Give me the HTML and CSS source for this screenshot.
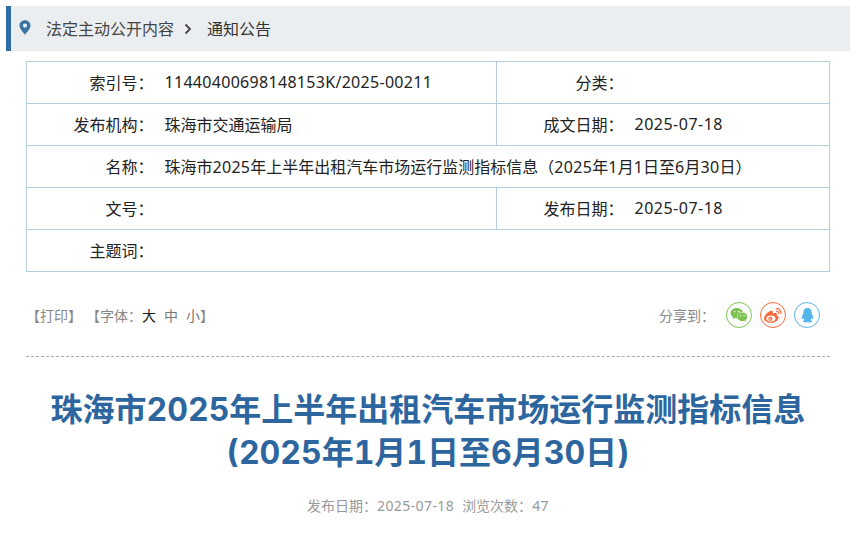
FILE: index.html
```html
<!DOCTYPE html>
<html lang="zh-CN">
<head>
<meta charset="utf-8">
<title>通知公告</title>
<link rel="stylesheet" href="styles.css">
</head>
<body>
<div class="crumb">
  <svg class="pin" width="12" height="15" viewBox="0 0 12 15"><path fill-rule="evenodd" fill="#3a72a3" d="M6 .3C2.800.3.5 2.700.5 5.600c0 3.400 3.800 6.900 5.500 9.200 1.700-2.300 5.500-5.800 5.500-9.200C11.500 2.700 9.200.3 6 .3zM6 3.500a2.100 2.100 0 1 1 0 4.200 2.100 2.100 0 0 1 0-4.200z"/></svg>
  <span class="crumb-link">法定主动公开内容</span>
  <svg class="chev" width="8" height="12" viewBox="0 0 8 12"><path d="M1.500 1.500 6 6l-4.500 4.500" fill="none" stroke="#444" stroke-width="1.800"/></svg>
  <span class="crumb-cur">通知公告</span>
</div>
<div class="wrap">
  <table class="meta">
    <tr><th>索引号：</th><td class="val"><span class="num">11440400698148153K/2025-00211</span></td><th class="th2">分类：</th><td class="val2"></td></tr>
    <tr><th>发布机构：</th><td class="val">珠海市交通运输局</td><th class="th2">成文日期：</th><td class="val2"><span class="date">2025-07-18</span></td></tr>
    <tr><th>名称：</th><td class="val" colspan="3">珠海市<span class="num">2025</span>年上半年出租汽车市场运行监测指标信息（<span class="num">2025</span>年<span class="num">1</span>月<span class="num">1</span>日至<span class="num">6</span>月<span class="num">30</span>日）</td></tr>
    <tr><th>文号：</th><td class="val"></td><th class="th2">发布日期：</th><td class="val2"><span class="date">2025-07-18</span></td></tr>
    <tr><th>主题词：</th><td class="val" colspan="3"></td></tr>
  </table>
  <div class="tools">
    <div class="tools-left">
      <span>【打印】</span>
      <span class="font-opt">【字体：<b class="active">大</b><b>中</b><b>小</b>】</span>
    </div>
    <div class="share">
      <span class="share-label">分享到：</span>
      <span class="ico ico-wx">
        <svg width="18" height="16" viewBox="0 0 20 18"><path fill="#7cc34f" d="M7.500 1C3.600 1 .6 3.500.6 6.800c0 1.900 1 3.400 2.700 4.600l-.7 2.100 2.400-1.200c.8.200 1.600.3 2.500.3h.6c-.2-.5-.3-1.100-.3-1.600 0-3 2.600-5.400 6-5.400h.6C13.700 2.900 10.900 1 7.500 1z"/><path fill="#7cc34f" d="M19.400 11c0-2.700-2.600-4.800-5.600-4.800-3.200 0-5.700 2.100-5.700 4.800s2.500 4.800 5.700 4.800c.7 0 1.300-.1 2-.3l1.900 1-.5-1.700c1.300-.9 2.200-2.300 2.200-3.800z"/><circle cx="5.200" cy="5" r=".9" fill="#fff"/><circle cx="9.800" cy="5" r=".9" fill="#fff"/><circle cx="11.800" cy="9.800" r=".7" fill="#fff"/><circle cx="15.800" cy="9.800" r=".7" fill="#fff"/></svg>
      </span>
      <span class="ico ico-wb">
        <svg width="20" height="17" viewBox="0 0 20 18"><path fill="#f8693d" d="M8.300 16.800c-4 0-7.800-1.900-7.800-4.900 0-1.600 1-3.400 2.700-5.100C5.600 4.400 8.400 3.400 9.500 4.500c.5.500.5 1.300.2 2.300 1.500-.6 3.400-.9 4.200.1.400.6.400 1.300 0 2.200 1.200.4 2.100 1.100 2.100 2.400 0 2.400-3.400 5.300-7.700 5.300z"/><ellipse cx="7.800" cy="12.300" rx="4.800" ry="3.200" fill="#fff"/><circle cx="7.200" cy="12.500" r="2.200" fill="#f8693d"/><circle cx="6.800" cy="12.800" r=".8" fill="#fff"/><path d="M13.500 1.800c2.900-.5 5.400 2 4.800 5M13.800 4.500c1.300-.2 2.300.9 2.100 2.200" fill="none" stroke="#f8693d" stroke-width="1.300" stroke-linecap="round"/></svg>
      </span>
      <span class="ico ico-qq">
        <svg width="15" height="17" viewBox="0 0 18 20"><path fill="#55b5ea" d="M9 1C5.800 1 4 3.400 4 6.300v1.500C2.900 9.500 2 11.300 2 13c0 1.200.4 1.600.9 1.300.4-.2.800-.7 1.100-1.300.2 1 .7 1.900 1.400 2.500-1 .4-1.800.9-1.800 1.500C3.600 18 5.400 18.500 7 18.300c.8-.1 1.500-.3 2-.5.500.2 1.200.4 2 .5 1.600.2 3.400-.3 3.400-1.300 0-.6-.8-1.100-1.800-1.500.7-.6 1.200-1.500 1.400-2.500.3.600.7 1.100 1.100 1.300.5.300.9-.1.900-1.300 0-1.700-.9-3.500-2-5.200V6.300C14 3.400 12.200 1 9 1z"/></svg>
      </span>
    </div>
  </div>
  <h1 class="title">珠海市2025年上半年出租汽车市场运行监测指标信息<br>(2025年1月1日至6月30日)</h1>
  <p class="info">发布日期：<span class="num">2025-07-18</span><span class="views">浏览次数：<span class="num">47</span></span></p>
</div>
</body>
</html>
```
FILE: styles.css
```css
* { box-sizing: border-box; }
html, body { margin: 0; padding: 0; background: #fff; }
body {
  height: 538px;
  overflow: hidden;
  font-family: "Noto Sans", "Noto Sans CJK SC", sans-serif;
  padding: 6px 10px 0 6px;
  color: #222;
}
.crumb {
  height: 45px;
  background: #ebeef1;
  border-left: 5px solid #2d6da3;
  display: flex;
  align-items: center;
  font-size: 16px;
  padding-left: 8px;
}
.pin { margin-right: 15px; margin-top: -3px; }
.crumb-link { color: #444; margin-top: -1px; }
.chev { margin: 0 15px 0 10px; }
.crumb-cur { color: #333; margin-top: -1px; }
.wrap { margin: 10px 0 0 20px; width: 804px; }
.meta {
  width: 100%;
  border-collapse: collapse;
  table-layout: fixed;
  font-size: 16px;
  color: #222;
}
.meta tr { height: 42px; }
.meta th, .meta td { border-top: 1px solid #b4cde0; border-bottom: 1px solid #b4cde0; padding: 0 0 1px; font-weight: 400; }
.meta tr > :first-child { border-left: 1px solid #b4cde0; }
.meta tr > :last-child { border-right: 1px solid #b4cde0; }
.meta th { width: 127px; text-align: right; }
.meta .val { padding-left: 11px; width: 343px; white-space: nowrap; }
.meta .th2 { border-left: 1px solid #b4cde0; }
.meta .val2 { padding-left: 11px; }
.meta .num { letter-spacing: .3px; }
.meta .date { letter-spacing: .5px; }
.tools {
  display: flex;
  justify-content: space-between;
  align-items: center;
  height: 85px;
  padding-top: 2px;
  border-bottom: 1px dashed #aaa;
  font-size: 14px;
  color: #888;
}
.tools-left { display: flex; gap: 4px; }
.tools-left b { font-weight: 400; margin-right: 8px; color: #777; }
.tools-left b:last-child { margin-right: 0; }
.tools-left b.active { color: #222; }
.share { display: flex; align-items: center; margin-right: 10px; }
.share-label { margin-right: 3px; }
.ico {
  width: 26px; height: 26px;
  border-radius: 50%;
  border: 1px solid;
  display: flex; align-items: center; justify-content: center;
  margin-left: 8px;
}
.ico-wx { border-color: #7cc34f; }
.ico-wb { border-color: #f8693d; }
.ico-qq { border-color: #55b5ea; }
.title {
  margin: 31px 0 0;
  text-align: center;
  font-family: Inter, "Noto Sans CJK SC", sans-serif;
  font-variant-numeric: tabular-nums;
  font-size: 32px;
  line-height: 43px;
  color: #2d669f;
  font-weight: 700;
}
.info {
  margin: 21px 0 0;
  text-align: center;
  font-size: 14px;
  color: #999;
}
.info .num { letter-spacing: .4px; }
.views { margin-left: 8px; }
```
